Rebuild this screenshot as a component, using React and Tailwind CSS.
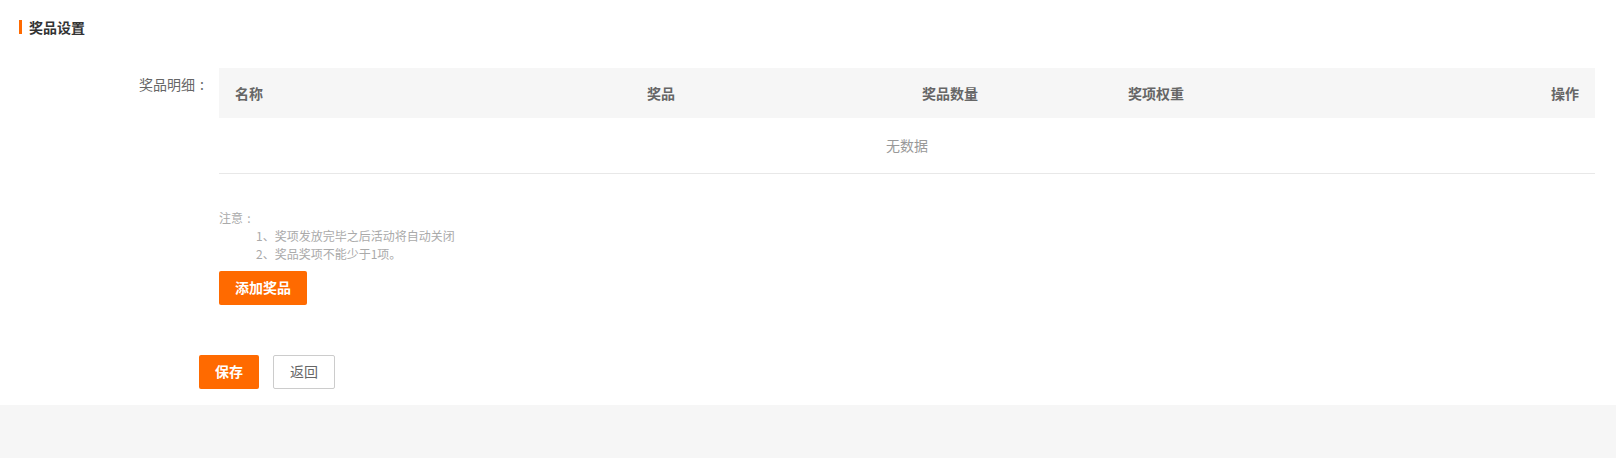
import React from 'react';

const columns = [
  { key: 'name', title: '名称', width: 'w-[412px]', align: 'text-left' },
  { key: 'prize', title: '奖品', width: 'w-[275px]', align: 'text-left' },
  { key: 'count', title: '奖品数量', width: 'w-[206px]', align: 'text-left' },
  { key: 'weight', title: '奖项权重', width: 'w-[300px]', align: 'text-left' },
  { key: 'action', title: '操作', width: '', align: 'text-right' },
];

const prizes = [];

// full-width colon, centred in its box like the original font renders it
const Colon = ({ size }) => (
  <span className={`inline-block text-center ${size}`}>:</span>
);

export default function App() {
  return (
    <div className="min-h-screen bg-[#f6f6f6] font-['Noto_Sans_CJK_SC','Noto_Sans',sans-serif]">
      <div className="bg-white pb-[16px]">
        {/* Section title */}
        <div className="flex items-center pt-[20px] pl-[19px]">
          <span className="block w-[3px] h-[14px] bg-[#ff6a00]" />
          <h2 className="ml-[7px] text-[14px] leading-[14px] font-bold text-[#333]">奖品设置</h2>
        </div>

        {/* Prize detail table */}
        <div className="flex mt-[34px] mr-[21px]">
          <label className="w-[209px] shrink-0 text-right text-[14px] leading-[32px] text-[#666]">
            奖品明细<Colon size="w-[14px]" />
          </label>
          <div className="flex-1 ml-[10px]">
            <table className="w-full table-fixed border-collapse">
              <thead>
                <tr className="h-[50px] bg-[#f6f6f6]">
                  {columns.map((col) => (
                    <th
                      key={col.key}
                      className={`${col.width} ${col.align} px-[16px] text-[14px] font-bold text-[#666]`}
                    >
                      {col.title}
                    </th>
                  ))}
                </tr>
              </thead>
              <tbody>
                {prizes.length === 0 ? (
                  <tr className="h-[55px] border-b border-[#e8e8e8]">
                    <td colSpan={5} className="text-center text-[14px] text-[#999]">无数据</td>
                  </tr>
                ) : null}
              </tbody>
            </table>

            <div className="mt-[35px] text-[12px] leading-[18px] text-[#aaa]">
              <p>注意<Colon size="w-[12px]" /></p>
              <p className="pl-[37px]">1、奖项发放完毕之后活动将自动关闭</p>
              <p className="pl-[37px]">2、奖品奖项不能少于1项。</p>
            </div>

            <button className="mt-[8px] w-[88px] h-[34px] rounded-[2px] bg-[#ff6a00] text-white text-[14px] font-bold">
              添加奖品
            </button>
          </div>
        </div>

        {/* Actions */}
        <div className="flex gap-[14px] mt-[50px] pl-[199px]">
          <button className="w-[60px] h-[34px] rounded-[2px] bg-[#ff6a00] text-white text-[14px] font-bold">
            保存
          </button>
          <button className="w-[62px] h-[34px] rounded-[2px] border border-[#ccc] bg-white text-[#666] text-[14px]">
            返回
          </button>
        </div>
      </div>
    </div>
  );
}
